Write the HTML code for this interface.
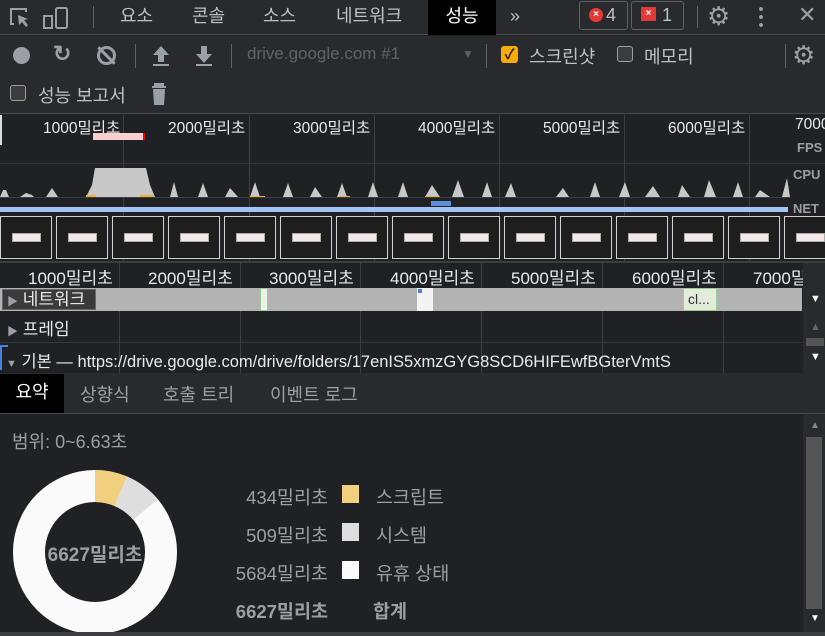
<!DOCTYPE html>
<html><head><meta charset="utf-8"><style>
*{margin:0;padding:0;box-sizing:border-box}
body{width:825px;height:636px;overflow:hidden;background:#202124;font-family:"Liberation Sans","Noto Sans CJK KR",sans-serif;color:#bdc1c6;position:relative;font-size:15px}
.a{position:absolute;white-space:nowrap}
.tab{position:absolute;top:0;height:35px;line-height:32px;font-size:18px;color:#bdc1c6}
.cb{position:absolute;width:16px;height:16px;border:1.5px solid #9aa0a6;border-radius:3px;background:#3c3c3c}
.lbl{position:absolute;font-size:18px;color:#e8eaed}
.vl{position:absolute;width:1px;background:#3c3e42}
.fr{position:absolute;top:216px;width:52px;height:43px;border:1.5px solid #d0d0d0;background:#1e1e1e}
.fr i{position:absolute;left:11px;top:16px;width:29px;height:9px;background:#f3e9e9;border:1px solid #aaa}
.r1{position:absolute;top:116px;font-size:15.5px;color:#e8eaed;white-space:nowrap}
.r2{position:absolute;top:264px;font-size:17px;color:#e8eaed;white-space:nowrap}
.s{position:absolute;font-size:18.5px;color:#9aa0a6;white-space:nowrap}
</style></head><body>
<!-- top tab bar -->
<div class="a" style="left:0;top:0;width:825px;height:35px;background:#292a2d;border-bottom:1px solid #494c50"></div>
<svg class="a" style="left:8px;top:6px" width="70" height="24" viewBox="0 0 70 24"><path d="M6 18H3V3h15v3" fill="none" stroke="#9aa0a6" stroke-width="2"/><path d="M10 9l10 4-4 1 4 5-2 2-4-5-3 3z" fill="#9aa0a6"/><rect x="48" y="2" width="11" height="20" rx="1.5" fill="none" stroke="#9aa0a6" stroke-width="2"/><rect x="36" y="10" width="8" height="12" fill="none" stroke="#9aa0a6" stroke-width="2"/></svg>
<div class="a" style="left:93px;top:6px;width:1px;height:22px;background:#5f6368"></div>
<div class="tab" style="left:120px">요소</div>
<div class="tab" style="left:192px">콘솔</div>
<div class="tab" style="left:263px">소스</div>
<div class="tab" style="left:336px">네트워크</div>
<div class="tab" style="left:428px;width:68px;background:#000;color:#fff;text-align:center">성능</div>
<div class="tab" style="left:510px;font-size:18px">»</div>
<div class="a" style="left:579px;top:1px;width:49px;height:29px;border:1px solid #5f6368;border-radius:3px"></div>
<div class="a" style="left:589px;top:8px;width:14px;height:14px;border-radius:50%;background:#e53935;color:#fff;font-size:10px;line-height:14px;text-align:center;font-weight:bold">×</div>
<div class="a" style="left:606px;top:5px;font-size:18px">4</div>
<div class="a" style="left:631px;top:1px;width:53px;height:29px;border:1px solid #5f6368;border-radius:3px"></div>
<div class="a" style="left:641px;top:7px;width:15px;height:14px;background:#e53935;color:#fff;font-size:10px;line-height:14px;text-align:center;font-weight:bold">×</div>
<div class="a" style="left:662px;top:5px;font-size:18px">1</div>
<div class="a" style="left:697px;top:6px;width:1px;height:22px;background:#5f6368"></div>
<div class="a" style="left:707px;top:1px;font-size:26px;color:#9aa0a6">⚙</div>
<div class="a" style="left:759px;top:5px;width:4px;height:22px;background:radial-gradient(circle,#9aa0a6 1.8px,transparent 2px) 0 0/4px 8px"></div>
<div class="a" style="left:798px;top:2px;font-size:22px;color:#9aa0a6">✕</div>
<!-- toolbar -->
<div class="a" style="left:0;top:36px;width:825px;height:78px;background:#292a2d;border-bottom:1px solid #494c50"></div>
<div class="a" style="left:13px;top:47px;width:17px;height:17px;border-radius:50%;background:#9aa0a6"></div>
<div class="a" style="left:53px;top:41px;font-size:22px;color:#9aa0a6;font-weight:bold">↻</div>
<div class="a" style="left:97px;top:46px;width:19px;height:19px;border-radius:50%;border:3px solid #9aa0a6"></div>
<div class="a" style="left:105px;top:44px;width:3px;height:23px;background:#9aa0a6;transform:rotate(-45deg)"></div>
<div class="a" style="left:135px;top:44px;width:1px;height:24px;background:#5f6368"></div>
<svg class="a" style="left:152px;top:45px" width="66" height="22"><path d="M9 1l8 9h-5v7H6v-7H1z M1 19h16v2H1z" fill="#9aa0a6"/><path d="M49 1h6v8h5l-8 9-8-9h5z M44 19h16v2H44z" fill="#9aa0a6"/></svg>
<div class="a" style="left:231px;top:44px;width:1px;height:24px;background:#5f6368"></div>
<div class="a" style="left:247px;top:44px;font-size:17px;color:#5f6368">drive.google.com #1</div>
<div class="a" style="left:462px;top:47px;font-size:12px;color:#5f6368">▼</div>
<div class="a" style="left:486px;top:44px;width:1px;height:24px;background:#5f6368"></div>
<div class="a" style="left:501px;top:46px;width:17px;height:17px;border-radius:3px;background:#f9ab00;color:#202124;font-size:14px;line-height:17px;text-align:center;font-weight:bold">✓</div>
<div class="lbl" style="left:529px;top:43px;color:#bdc1c6">스크린샷</div>
<div class="cb" style="left:617px;top:46px"></div>
<div class="lbl" style="left:644px;top:43px;color:#bdc1c6">메모리</div>
<div class="a" style="left:785px;top:44px;width:1px;height:24px;background:#5f6368"></div>
<div class="a" style="left:792px;top:40px;font-size:26px;color:#9aa0a6">⚙</div>
<div class="cb" style="left:10px;top:85px"></div>
<div class="lbl" style="left:38px;top:82px;color:#bdc1c6">성능 보고서</div>
<svg class="a" style="left:151px;top:82px" width="16" height="24"><rect x="3" y="1" width="10" height="3" fill="#9aa0a6"/><rect x="1" y="4" width="14" height="2" fill="#9aa0a6"/><path d="M2 7h12l-1 16H3z" fill="#9aa0a6"/></svg>
<!-- overview -->
<div class="vl" style="left:249px;top:115px;height:147px"></div><div class="vl" style="left:374px;top:115px;height:147px"></div><div class="vl" style="left:499px;top:115px;height:147px"></div><div class="vl" style="left:624px;top:115px;height:147px"></div><div class="vl" style="left:749px;top:115px;height:147px"></div><div class="vl" style="left:123px;top:115px;height:147px"></div>
<div class="a" style="left:0;top:115px;width:2px;height:30px;background:#ddd"></div>
<div class="a" style="left:0;top:163px;width:825px;height:1px;background:#35363a"></div>
<div class="r1" style="left:43px">1000밀리초</div>
<div class="r1" style="left:168px">2000밀리초</div>
<div class="r1" style="left:293px">3000밀리초</div>
<div class="r1" style="left:418px">4000밀리초</div>
<div class="r1" style="left:543px">5000밀리초</div>
<div class="r1" style="left:668px">6000밀리초</div>
<div class="r1" style="left:795px">7000</div>
<div class="a" style="left:93px;top:133px;width:52px;height:7px;background:#f8cecf;border-right:2px solid #e00"></div>
<div class="a" style="top:140px;left:797px;font-size:13px;font-weight:bold;color:#9aa0a6">FPS</div>
<div class="a" style="top:167px;left:793px;font-size:13px;font-weight:bold;color:#9aa0a6">CPU</div>
<svg class="a" style="left:0;top:160px" width="790" height="40"><path fill="#c8c8c8" d="M0 37L3 30 6 30 9 37 20 37 26 33 32 35 34 37 46 37 52 28 58 37 86 37 92 25 95 8 146 8 150 25 155 37 170 37 174 22 178 37 198 37 203 23 208 37 225 37 230 28 238 37 250 37 255 22 260 37 283 37 288 23 293 37 310 37 315 27 322 37 337 37 342 23 347 37 368 37 373 22 378 37 398 37 403 22 408 37 425 37 432 25 440 37 452 37 458 20 464 37 482 37 487 22 492 37 505 37 511 23 516 37 556 37 563 28 569 37 590 37 595 22 600 37 619 37 625 22 630 37 645 37 653 26 660 37 678 37 682 25 690 37 704 37 709 20 716 37 733 37 738 22 743 37 755 37 760 30 770 37 782 37 787 18 790 37Z"/><path d="M86 36h10M140 36h14M250 37h15M340 37h10M425 37h14" stroke="#f0b030" stroke-width="2"/><line x1="0" y1="37.5" x2="790" y2="37.5" stroke="#3c3e42"/></svg>
<div class="a" style="left:431px;top:201px;width:20px;height:5px;background:#5a8ed8"></div>
<div class="a" style="left:0;top:207px;width:788px;height:5px;background:#a4c4f4"></div>
<div class="a" style="top:201px;left:793px;font-size:13px;font-weight:bold;color:#9aa0a6">NET</div>
<div class="fr" style="left:0"><i></i></div><div class="fr" style="left:56px"><i></i></div><div class="fr" style="left:112px"><i></i></div><div class="fr" style="left:168px"><i></i></div><div class="fr" style="left:224px"><i></i></div><div class="fr" style="left:280px"><i></i></div><div class="fr" style="left:336px"><i></i></div><div class="fr" style="left:392px"><i></i></div><div class="fr" style="left:448px"><i></i></div><div class="fr" style="left:504px"><i></i></div><div class="fr" style="left:560px"><i></i></div><div class="fr" style="left:616px"><i></i></div><div class="fr" style="left:672px"><i></i></div><div class="fr" style="left:728px"><i></i></div><div class="fr" style="left:784px"><i></i></div>
<div class="a" style="left:0;top:261px;width:825px;height:2px;background:#3c3e42"></div>
<!-- timeline -->
<div class="vl" style="left:119px;top:263px;height:110px"></div><div class="vl" style="left:240px;top:263px;height:110px"></div><div class="vl" style="left:360px;top:263px;height:110px"></div><div class="vl" style="left:481px;top:263px;height:110px"></div><div class="vl" style="left:602px;top:263px;height:110px"></div><div class="vl" style="left:723px;top:263px;height:110px"></div>
<div class="r2" style="left:28px">1000밀리초</div>
<div class="r2" style="left:148px">2000밀리초</div>
<div class="r2" style="left:269px">3000밀리초</div>
<div class="r2" style="left:390px">4000밀리초</div>
<div class="r2" style="left:511px">5000밀리초</div>
<div class="r2" style="left:632px">6000밀리초</div>
<div class="r2" style="left:753px">7000밀</div>
<div class="a" style="left:0;top:288px;width:802px;height:23px;background:#b3b3b3"></div>
<div class="a" style="left:260px;top:288px;width:8px;height:23px;background:#eaf3e6;border:1px solid #9c9"></div>
<div class="a" style="left:417px;top:288px;width:16px;height:23px;background:#f3f3f3"></div>
<div class="a" style="left:418px;top:289px;width:4px;height:4px;background:#4a80e0"></div>
<div class="a" style="left:683px;top:288px;width:34px;height:23px;background:#e2ecd8;border:1px solid #9c9;color:#333;font-size:14px;line-height:21px;padding-left:4px">cl...</div>
<div class="a" style="left:2px;top:289px;width:94px;height:21px;background:#3a3a3a;border:1px solid #666;color:#e8eaed;font-size:17px;line-height:19px;padding-left:4px"><span style="font-size:11px;color:#9aa0a6">▶</span> 네트워크</div>
<div class="a" style="left:7px;top:315px;color:#e8eaed;font-size:17px"><span style="font-size:11px;color:#9aa0a6">▶</span> 프레임</div>
<div class="a" style="left:0;top:342px;width:802px;height:1px;background:#35363a"></div>
<div class="a" style="left:0;top:345px;width:8px;height:2px;background:#4a80e0"></div>
<div class="a" style="left:0;top:345px;width:2px;height:25px;background:#4a80e0"></div>
<div class="a" style="left:6px;top:348px;color:#e8eaed;font-size:16.5px"><span style="font-size:11px;color:#9aa0a6">▼</span> 기본 — https://drive.google.com/drive/folders/17enIS5xmzGYG8SCD6HIFEwfBGterVmtS</div>
<div class="a" style="left:803px;top:263px;width:22px;height:110px;background:#292a2d"></div>
<div class="a" style="left:810px;top:293px;font-size:11px;color:#fff">▼</div>
<div class="a" style="left:810px;top:321px;font-size:11px;color:#666">▲</div>
<div class="a" style="left:806px;top:338px;width:18px;height:8px;background:#555"></div>
<div class="a" style="left:810px;top:351px;font-size:11px;color:#fff">▼</div>
<!-- bottom tabs -->
<div class="a" style="left:0;top:373px;width:825px;height:41px;background:#292a2d;border-bottom:1px solid #494c50"></div>
<div class="a" style="left:0;top:374px;width:64px;height:39px;background:#000;color:#fff;font-size:18px;line-height:37px;text-align:center">요약</div>
<div class="a" style="left:80px;top:381px;font-size:18px;color:#9aa0a6">상향식</div>
<div class="a" style="left:163px;top:381px;font-size:18px;color:#9aa0a6">호출 트리</div>
<div class="a" style="left:270px;top:381px;font-size:18px;color:#9aa0a6">이벤트 로그</div>
<!-- summary -->
<div class="a" style="left:12px;top:428px;font-size:18px;color:#9aa0a6">범위: 0~6.63초</div>
<svg class="a" style="left:0;top:460px" width="200" height="176"><g transform="translate(95,92)"><circle r="66" fill="none" stroke="#fafafa" stroke-width="32"/><path d="M0-82A82 82 0 0 1 32-75.5L19.5-46A50 50 0 0 0 0-50Z" fill="#f2cf7f"/><path d="M32-75.5A82 82 0 0 1 62.8-52.7L38.3-32.1A50 50 0 0 0 19.5-46Z" fill="#dedede"/></g></svg>
<div class="a" style="left:47px;top:540px;width:96px;text-align:center;font-size:19px;font-weight:bold;color:#9aa0a6">6627밀리초</div>
<div class="s" style="left:200px;top:484px;width:128px;text-align:right">434밀리초</div>
<div class="s" style="left:200px;top:522px;width:128px;text-align:right">509밀리초</div>
<div class="s" style="left:200px;top:560px;width:128px;text-align:right">5684밀리초</div>
<div class="s" style="left:200px;top:598px;width:128px;text-align:right;font-weight:bold">6627밀리초</div>
<div class="a" style="left:342px;top:485px;width:17px;height:18px;background:#f2cf7f"></div>
<div class="a" style="left:342px;top:523px;width:17px;height:18px;background:#dedede"></div>
<div class="a" style="left:342px;top:561px;width:17px;height:18px;background:#fafafa"></div>
<div class="s" style="left:376px;top:484px">스크립트</div>
<div class="s" style="left:376px;top:522px">시스템</div>
<div class="s" style="left:376px;top:560px">유휴 상태</div>
<div class="s" style="left:373px;top:598px;font-weight:bold">합계</div>
<div class="a" style="left:803px;top:415px;width:22px;height:218px;background:#292a2d"></div>
<div class="a" style="left:806px;top:437px;width:16px;height:172px;background:#555"></div>
<div class="a" style="left:810px;top:420px;font-size:10px;color:#888">▲</div>
<div class="a" style="left:810px;top:613px;font-size:10px;color:#fff">▼</div>
<div class="a" style="left:0;top:632px;width:825px;height:4px;background:#3c3e42"></div>
</body></html>
